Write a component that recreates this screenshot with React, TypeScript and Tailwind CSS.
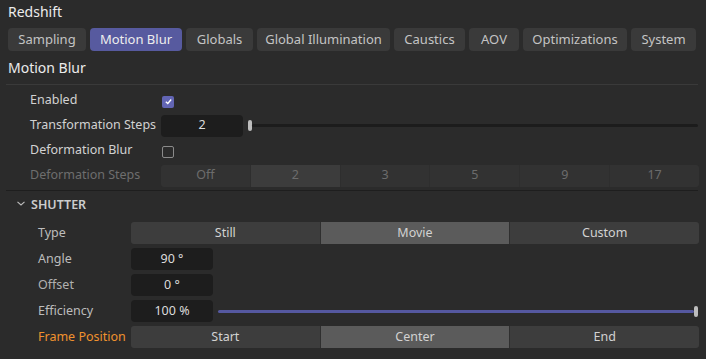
import { useState } from "react";

const tabs = [
  { name: "Sampling", width: "w-[78px]" },
  { name: "Motion Blur", width: "w-[92px]" },
  { name: "Globals", width: "w-[67px]" },
  { name: "Global Illumination", width: "w-[133px]" },
  { name: "Caustics", width: "w-[71px]" },
  { name: "AOV", width: "w-[50px]" },
  { name: "Optimizations", width: "w-[104px]" },
  { name: "System", width: "w-[65px]" },
];

const Check = ({ checked }: { checked: boolean }) =>
  checked ? (
    <div className="w-[12px] h-[12px] rounded-[2px] bg-[#6265b4] flex items-center justify-center">
      <svg width="9" height="9" viewBox="0 0 10 10">
        <path d="M2 5.2 L4.2 7.2 L8 2.8" stroke="#fff" strokeWidth="1.5" fill="none" />
      </svg>
    </div>
  ) : (
    <div className="w-[12px] h-[12px] rounded-[2px] border border-[#8a8a8a]" />
  );

const NumBox = ({ value }: { value: string }) => (
  <div className="w-[82px] h-[22px] rounded-[4px] bg-[#1d1d1d] text-[#dcdcdc] flex items-center justify-center">
    {value}
  </div>
);

const Segmented = ({
  items,
  active,
  disabled = false,
}: {
  items: string[];
  active: number;
  disabled?: boolean;
}) => (
  <div
    className={`flex-1 mr-[-1px] h-[22px] flex rounded-[3px] overflow-hidden ${
      disabled ? "bg-[#323232] text-[#6c6c6c]" : "bg-[#3d3d3d] text-[#d2d2d2]"
    }`}
  >
    {items.map((item, i) => (
      <div
        key={item}
        className={`flex-1 flex items-center justify-center ${
          i > 0 ? (disabled ? "border-l border-[#2e2e2e]" : "border-l border-[#2f2f2f]") : ""
        } ${i === active ? (disabled ? "bg-[#3c3c3c]" : "bg-[#5b5b5b]") : ""}`}
      >
        {item}
      </div>
    ))}
  </div>
);

export default function App() {
  const [activeTab, setActiveTab] = useState("Motion Blur");

  return (
    <div
      className="w-[706px] h-[359px] bg-[#2b2b2b] text-[#c8c8c8] px-[8px] overflow-hidden flex flex-col"
      style={{ fontFamily: '"Noto Sans", "Open Sans", sans-serif' }}
    >
      <div className="h-[28px] pt-[1px] text-[14px] leading-[22px] text-[#ececec]">Redshift</div>

      <div className="h-[23px] flex gap-[4px] text-[13px]">
        {tabs.map((tab) => (
          <button
            key={tab.name}
            onClick={() => setActiveTab(tab.name)}
            className={`${tab.width} shrink-0 h-full rounded-[4px] flex items-center justify-center whitespace-nowrap ${
              tab.name === activeTab ? "bg-[#575a9f] text-[#ededed]" : "bg-[#3a3a3a] text-[#c4c4c4]"
            }`}
          >
            {tab.name}
          </button>
        ))}
      </div>

      <div className="h-[33px] flex items-center text-[14px] text-[#ececec]">Motion Blur</div>
      <div className="h-px bg-[#3a3a3a] ml-[-2px]" />

      <div className="pt-[3px] text-[12.5px]">
        <div className="h-[25px] flex items-center">
          <div className="w-[153px] pl-[22px] text-[#d2d2d2]">Enabled</div>
          <div className="pl-[1px] pt-[2px]">
            <Check checked />
          </div>
        </div>
        <div className="h-[25px] flex items-center">
          <div className="w-[153px] pl-[22px] text-[#d2d2d2] whitespace-nowrap">Transformation Steps</div>
          <NumBox value="2" />
          <div className="flex-1 flex items-center pl-[5px]">
            <div className="w-[4px] h-[11px] rounded-[2px] bg-[#bdbdbd]" />
            <div className="flex-1 h-[3px] rounded-full bg-[#1c1c1c]" />
          </div>
        </div>
        <div className="h-[25px] flex items-center">
          <div className="w-[153px] pl-[22px] text-[#d2d2d2]">Deformation Blur</div>
          <div className="pl-[1px] pt-[2px]">
            <Check checked={false} />
          </div>
        </div>
        <div className="h-[25px] flex items-center">
          <div className="w-[153px] pl-[22px] text-[#6e6e6e]">Deformation Steps</div>
          <Segmented items={["Off", "2", "3", "5", "9", "17"]} active={1} disabled />
        </div>
      </div>

      <div className="h-px bg-[#1e1e1e] ml-[-2px] mt-[2px]" />

      <div className="h-[29px] flex items-center gap-[6px] pl-[9px] text-[12.5px] font-semibold text-[#cdcdcd]">
        <svg width="8" height="5" viewBox="0 0 8 5" className="mt-[-5px]">
          <path d="M0.5 0.8 L4 4 L7.5 0.8" stroke="#bdbdbd" strokeWidth="1.1" fill="none" />
        </svg>
        <span>SHUTTER</span>
      </div>

      <div className="pt-[2px] flex flex-col gap-[4px] text-[12.5px]">
        <div className="h-[22px] flex items-center">
          <div className="w-[123px] pl-[30px] text-[#bdbdbd]">Type</div>
          <Segmented items={["Still", "Movie", "Custom"]} active={1} />
        </div>
        <div className="h-[22px] flex items-center">
          <div className="w-[123px] pl-[30px] text-[#bdbdbd]">Angle</div>
          <NumBox value="90 °" />
        </div>
        <div className="h-[22px] flex items-center">
          <div className="w-[123px] pl-[30px] text-[#b0b0b0]">Offset</div>
          <NumBox value="0 °" />
        </div>
        <div className="h-[22px] flex items-center">
          <div className="w-[123px] pl-[30px] text-[#bdbdbd]">Efficiency</div>
          <NumBox value="100 %" />
          <div className="flex-1 flex items-center pl-[5px]">
            <div className="flex-1 h-[3px] rounded-full bg-[#5558a0]" />
            <div className="w-[4px] h-[11px] rounded-[2px] bg-[#bdbdbd]" />
          </div>
        </div>
        <div className="h-[22px] flex items-center">
          <div className="w-[123px] pl-[30px] text-[#f0922e] whitespace-nowrap">Frame Position</div>
          <Segmented items={["Start", "Center", "End"]} active={1} />
        </div>
      </div>
    </div>
  );
}
